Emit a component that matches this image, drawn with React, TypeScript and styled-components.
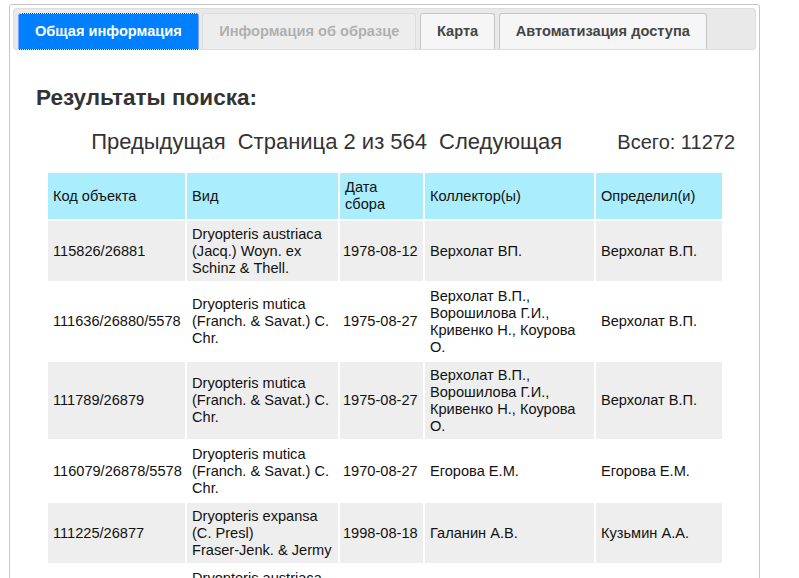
import React from "react";
import styled, { createGlobalStyle } from "styled-components";

const Global = createGlobalStyle`
  html { overflow: hidden; }
  body {
    margin: 0;
    background: #ffffff;
    font-family: "Liberation Sans", Arial, sans-serif;
  }
`;

const Panel = styled.div`
  box-sizing: border-box;
  width: 751px;
  margin: 4px 0 0 9px;
  min-height: 700px;
  padding: 3px;
  border: 1px solid #c5c5c5;
  border-radius: 3px;
  background: #ffffff;
`;

const Nav = styled.ul`
  display: flex;
  align-items: flex-start;
  margin: 0;
  padding: 4px 4px 0;
  list-style: none;
  background: #e9e9e9;
  border: 1px solid #dddddd;
  border-radius: 3px;
`;

const Tab = styled.li<{ $active?: boolean; $disabled?: boolean }>`
  position: relative;
  box-sizing: border-box;
  height: ${(p) => (p.$active ? "37px" : "36px")};
  margin: 0 3.5px ${(p) => (p.$active ? "-1px" : "0")} 0;
  padding: 0 16px;
  border: 1px solid ${(p) => (p.$active ? "#003eff" : "#c5c5c5")};
  border-bottom-width: ${(p) => (p.$active ? "1px" : "0")};
  border-radius: 3px 3px 0 0;
  background: ${(p) => (p.$active ? "#007fff" : "#f6f6f6")};
  color: ${(p) => (p.$active ? "#ffffff" : "#454545")};
  font-size: 14.6px;
  font-weight: bold;
  line-height: 35px;
  white-space: nowrap;
  opacity: ${(p) => (p.$disabled ? 0.35 : 1)};
  outline: ${(p) => (p.$active ? "1px dotted #ffffff" : "none")};
  outline-offset: -1px;
  z-index: ${(p) => (p.$active ? 1 : 0)};
`;

const Content = styled.div`
  padding: 35px 0 0 23px;
`;

const Heading = styled.h2`
  margin: 0 0 18px;
  font-size: 22.5px;
  line-height: 26px;
  font-weight: bold;
  color: #333333;
`;

const Pager = styled.div`
  display: grid;
  grid-template-columns: 1fr auto;
  align-items: baseline;
  width: 699px;
  margin-bottom: 17px;
  color: #333333;
`;

const PagerLinks = styled.div`
  display: flex;
  justify-content: center;
  gap: 12px;
  font-size: 22px;
  line-height: 25px;
`;

const Total = styled.div`
  text-align: right;
  font-size: 20px;
  line-height: 23px;
`;

const Table = styled.table`
  width: 678px;
  table-layout: fixed;
  border-collapse: separate;
  border-spacing: 2px;
  margin-left: 10px;
  font-size: 14.6px;
  line-height: 17px;
  color: #111111;
`;

const Th = styled.th<{ $w: number }>`
  width: ${(p) => p.$w}px;
  box-sizing: border-box;
  padding: 6px 5px;
  background: #aaedfd;
  font-weight: normal;
  text-align: left;
  vertical-align: middle;
`;

const Row = styled.tr<{ $odd: boolean }>`
  background: ${(p) => (p.$odd ? "#eeeeee" : "#ffffff")};
`;

const Td = styled.td<{ $nowrap?: boolean; $padLeft?: number }>`
  padding: 4.5px 5px 4.5px ${(p) => p.$padLeft ?? 5}px;
  vertical-align: middle;
  white-space: ${(p) => (p.$nowrap ? "nowrap" : "normal")};
`;

const NoWrap = styled.span`
  white-space: nowrap;
`;

const columns = [
  { title: "Код объекта", w: 137 },
  { title: "Вид", w: 151 },
  { title: "Дата сбора", w: 83 },
  { title: "Коллектор(ы)", w: 169 },
  { title: "Определил(и)", w: 126 },
];

const austriaca = "Dryopteris austriaca (Jacq.) Woyn. ex Schinz & Thell.";
const mutica = "Dryopteris mutica (Franch. & Savat.) C. Chr.";
const group = "Верхолат В.П., Ворошилова Г.И., Кривенко Н., Коурова О.";

const rows: React.ReactNode[][] = [
  ["115826/26881", austriaca, "1978-08-12", "Верхолат ВП.", "Верхолат В.П."],
  ["111636/26880/5578", mutica, "1975-08-27", group, "Верхолат В.П."],
  ["111789/26879", mutica, "1975-08-27", group, "Верхолат В.П."],
  ["116079/26878/5578", mutica, "1970-08-27", "Егорова Е.М.", "Егорова Е.М."],
  [
    "111225/26877",
    <>
      Dryopteris expansa (C. Presl) <NoWrap>Fraser-Jenk.</NoWrap> &amp; Jermy
    </>,
    "1998-08-18",
    "Галанин А.В.",
    "Кузьмин А.А.",
  ],
  ["111224/26876", austriaca, "1978-08-12", "Верхолат ВП.", "Верхолат В.П."],
];

export default function App() {
  return (
    <>
      <Global />
      <Panel>
        <Nav>
          <Tab $active>Общая информация</Tab>
          <Tab $disabled>Информация об образце</Tab>
          <Tab>Карта</Tab>
          <Tab>Автоматизация доступа</Tab>
        </Nav>
        <Content>
          <Heading>Результаты поиска:</Heading>
          <Pager>
            <PagerLinks>
              <span>Предыдущая</span>
              <span>Страница 2 из 564</span>
              <span>Следующая</span>
            </PagerLinks>
            <Total>Всего: 11272</Total>
          </Pager>
          <Table>
            <thead>
              <tr>
                {columns.map((c) => (
                  <Th key={c.title} $w={c.w}>
                    {c.title}
                  </Th>
                ))}
              </tr>
            </thead>
            <tbody>
              {rows.map((r, i) => (
                <Row key={i} $odd={i % 2 === 0}>
                  {r.map((cell, j) => (
                    <Td
                      key={j}
                      $nowrap={j === 0 || j === 2}
                      $padLeft={j === 2 ? 3 : 5}
                    >
                      {cell}
                    </Td>
                  ))}
                </Row>
              ))}
            </tbody>
          </Table>
        </Content>
      </Panel>
    </>
  );
}
